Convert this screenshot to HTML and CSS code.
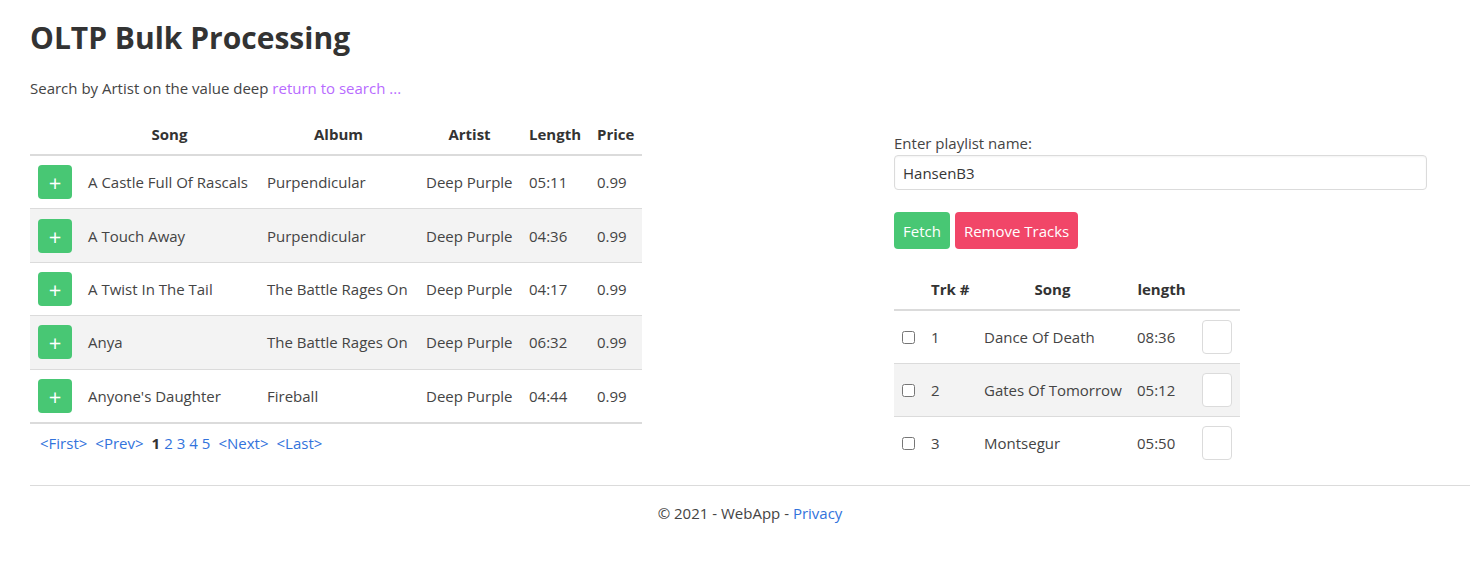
FILE: index.html
```html
<!DOCTYPE html>
<html>
<head>
<meta charset="utf-8">
<title>OLTP Bulk Processing</title>
<link rel="stylesheet" href="styles.css">
</head>
<body>
<div class="page">
  <h1 class="title">OLTP Bulk Processing</h1>
  <p class="subtitle">Search by Artist on the value deep <a class="visited" href="#">return to search ...</a></p>
  <div class="main">
    <div class="left">
      <table class="grid tracks">
        <colgroup>
          <col class="c-btn"><col class="c-song"><col class="c-album"><col class="c-artist"><col class="c-len"><col class="c-price">
        </colgroup>
        <thead>
          <tr><th></th><th>Song</th><th>Album</th><th>Artist</th><th>Length</th><th>Price</th></tr>
        </thead>
        <tbody>
          <tr><td><button class="add">+</button></td><td>A Castle Full Of Rascals</td><td>Purpendicular</td><td>Deep Purple</td><td>05:11</td><td>0.99</td></tr>
          <tr><td><button class="add">+</button></td><td>A Touch Away</td><td>Purpendicular</td><td>Deep Purple</td><td>04:36</td><td>0.99</td></tr>
          <tr><td><button class="add">+</button></td><td>A Twist In The Tail</td><td>The Battle Rages On</td><td>Deep Purple</td><td>04:17</td><td>0.99</td></tr>
          <tr><td><button class="add">+</button></td><td>Anya</td><td>The Battle Rages On</td><td>Deep Purple</td><td>06:32</td><td>0.99</td></tr>
          <tr><td><button class="add">+</button></td><td>Anyone's Daughter</td><td>Fireball</td><td>Deep Purple</td><td>04:44</td><td>0.99</td></tr>
        </tbody>
      </table>
      <div class="pager">
        <a class="word" href="#">&lt;First&gt;</a><a class="word" href="#">&lt;Prev&gt;</a><b class="num">1</b><a class="num" href="#">2</a><a class="num" href="#">3</a><a class="num" href="#">4</a><a class="num last-num" href="#">5</a><a class="word" href="#">&lt;Next&gt;</a><a class="word" href="#">&lt;Last&gt;</a>
      </div>
    </div>
    <div class="right">
      <label class="label">Enter playlist name:</label>
      <input class="input" type="text" value="HansenB3">
      <div class="actions">
        <button class="btn btn-success">Fetch</button>
        <button class="btn btn-danger">Remove Tracks</button>
      </div>
      <table class="grid playlist">
        <colgroup>
          <col class="p-chk"><col class="p-trk"><col class="p-song"><col class="p-len"><col class="p-box">
        </colgroup>
        <thead>
          <tr><th></th><th>Trk #</th><th>Song</th><th>length</th><th></th></tr>
        </thead>
        <tbody>
          <tr><td><input type="checkbox" class="chk"></td><td>1</td><td>Dance Of Death</td><td>08:36</td><td><span class="box"></span></td></tr>
          <tr><td><input type="checkbox" class="chk"></td><td>2</td><td>Gates Of Tomorrow</td><td>05:12</td><td><span class="box"></span></td></tr>
          <tr><td><input type="checkbox" class="chk"></td><td>3</td><td>Montsegur</td><td>05:50</td><td><span class="box"></span></td></tr>
        </tbody>
      </table>
    </div>
  </div>
</div>
<footer class="footer">
  <span>&copy; 2021 - WebApp - <a href="#">Privacy</a></span>
</footer>
</body>
</html>
```
FILE: styles.css
```css
* { box-sizing: border-box; }
html, body { margin: 0; padding: 0; background: #fff; }
body {
  font-family: "Open Sans", "Noto Sans", sans-serif;
  font-size: 15px;
  line-height: 24px;
  color: #444;
}
a { color: #3273dc; text-decoration: none; }
a.visited { color: #b86bff; }
.page { padding: 0 30px; }
.title {
  margin: 0;
  padding-top: 18px;
  font-size: 30px;
  line-height: 40px;
  font-weight: 700;
  color: #333;
}
.subtitle { margin: 18px 0 0 0; line-height: 24px; }
.main { display: flex; align-items: flex-start; margin-top: 14px; }
.left { width: 612px; }
.right { width: 533px; margin-left: 252px; padding-top: 17px; display: flex; flex-direction: column; }

.grid { border-collapse: collapse; table-layout: fixed; }
.grid th {
  font-weight: 700;
  color: #333;
  text-align: center;
  padding: 8px 8px;
  border-bottom: 2px solid #dbdbdb;
  line-height: 24px;
  white-space: nowrap;
}
.grid td {
  padding: 9px 8px;
  border-bottom: 1px solid #dbdbdb;
  vertical-align: middle;
  white-space: nowrap;
  line-height: 24px;
}
.tracks td { padding-top: 9.2px; padding-bottom: 9.2px; }
.grid tbody tr:nth-child(even) td { background: #f3f3f3; }
.tracks { width: 612px; }
.tracks tbody tr:last-child td { border-bottom: 2px solid #dbdbdb; }
.c-btn { width: 50px; }
.c-song { width: 179px; }
.c-album { width: 159px; }
.c-artist { width: 103px; }
.c-len { width: 68px; }
.c-price { width: 53px; }

.add {
  display: block;
  width: 34px; height: 34px;
  border: none; border-radius: 4px;
  background: #48c774; color: #fff;
  font-family: "Open Sans", sans-serif;
  font-size: 22px; line-height: 34px;
  padding: 0; font-weight: 400;
}
.pager { display: flex; padding: 7px 10px; font-size: 15px; }
.pager .word { margin-right: 8px; }
.pager .num { margin-right: 4px; }
.pager .last-num { margin-right: 8px; }
.pager b { color: #333; }

.label { display: block; line-height: 24px; }
.input {
  display: block;
  width: 533px; height: 35px;
  margin-top: 0;
  border: 1px solid #dbdbdb; border-radius: 4px;
  padding: 0 8px;
  font-family: "Open Sans", sans-serif; font-size: 15px; color: #363636;
  box-shadow: inset 0 1px 2px rgba(10,10,10,0.05);
}
.actions { display: flex; gap: 5px; margin-top: 22px; }
.btn {
  height: 37px; border: none; border-radius: 4px;
  color: #fff; padding: 0 9px;
  font-family: "Open Sans", sans-serif; font-size: 15px;
}
.btn-success { background: #48c774; }
.btn-danger { background: #f14668; }

.playlist { width: 346px; margin-top: 20px; }
.playlist tbody tr:last-child td { border-bottom: none; }
.p-chk { width: 29px; }
.p-trk { width: 53px; }
.p-song { width: 153px; }
.p-len { width: 65px; }
.p-box { width: 46px; }
.playlist td:first-child { padding-left: 8px; padding-right: 0; }
.chk { margin: 0; width: 13px; height: 13px; display: block; }
.box {
  display: block; width: 30px; height: 34px;
  border: 1px solid #dbdbdb; border-radius: 4px; background: #fff;
}
.footer {
  margin: 16px 3px 0 30px;
  border-top: 1px solid #dbdbdb;
  text-align: center;
  padding-top: 15px;
  line-height: 24px;
}
```
